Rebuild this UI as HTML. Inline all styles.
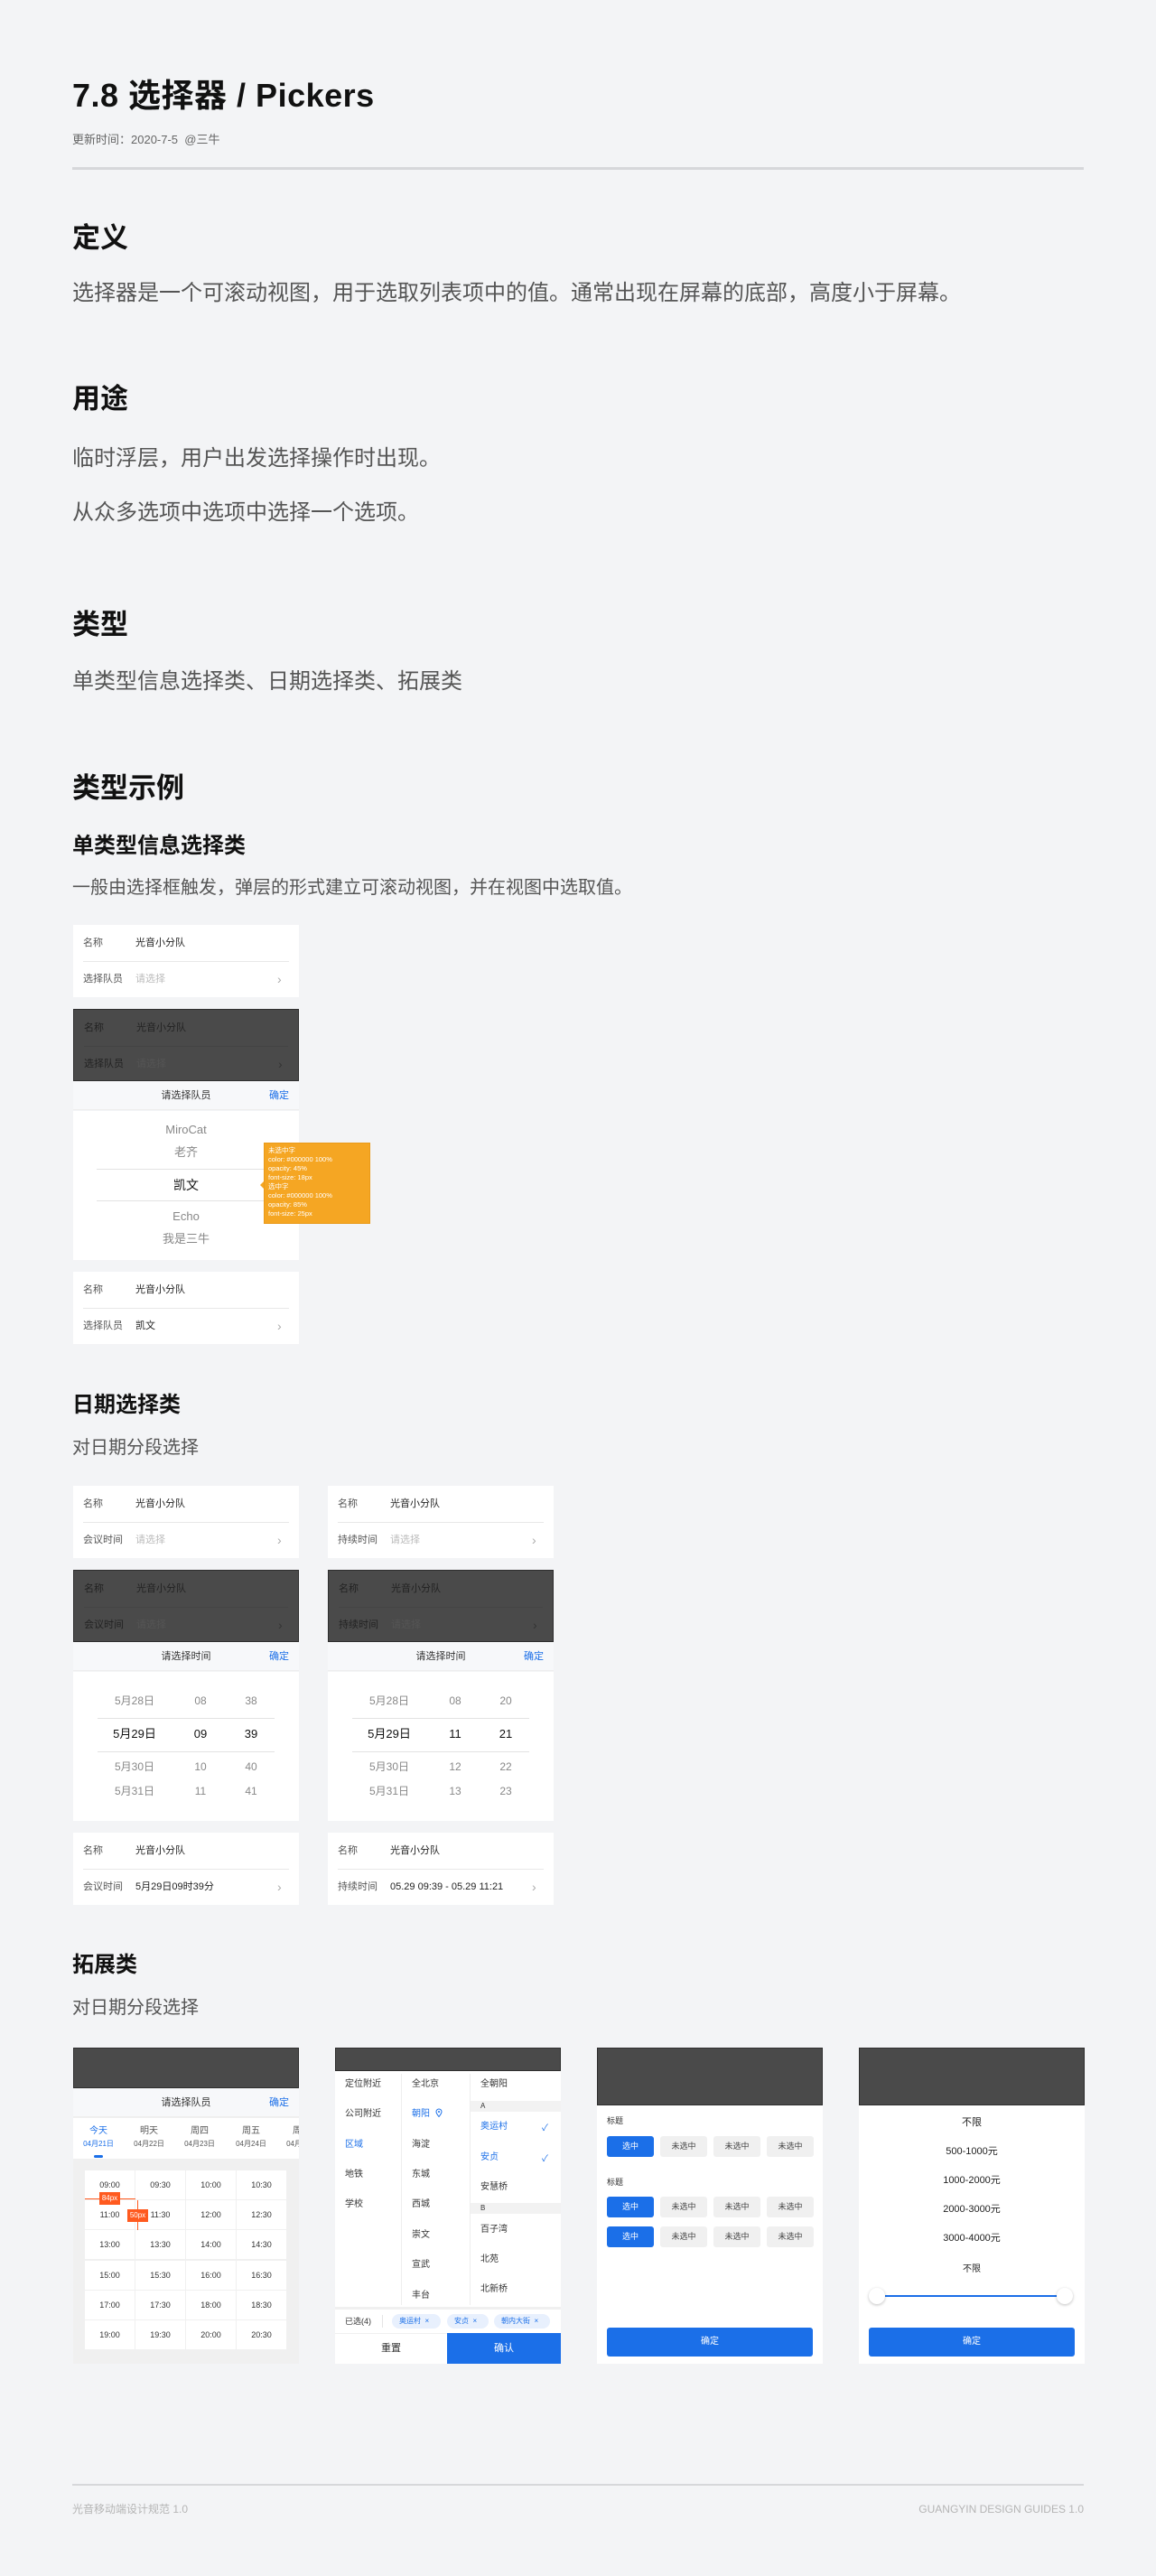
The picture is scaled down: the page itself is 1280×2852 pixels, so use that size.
<!DOCTYPE html>
<html><head><meta charset="utf-8">
<style>
*{margin:0;padding:0;box-sizing:border-box}
body{width:1280px;height:2852px;background:#f3f4f6;position:relative;font-family:"Liberation Sans","Noto Sans CJK SC",sans-serif;color:#222;overflow:hidden}
.a{position:absolute;white-space:nowrap}
.h1{font-size:36px;font-weight:bold;color:#111;letter-spacing:0.5px}
.h2{font-size:31px;font-weight:bold;color:#111}
.h3{font-size:24px;font-weight:bold;color:#111}
.p{font-size:24px;color:#555}
.ps{font-size:20px;color:#555}
.card{position:absolute;width:250px;height:80px;background:#fff}
.card .l{position:absolute;left:11px;font-size:11px;line-height:40px;color:#555}
.card .v{position:absolute;left:69px;font-size:11px;line-height:40px;color:#222}
.card .ph{color:#bbb}
.card .dv{position:absolute;left:11px;right:11px;top:40px;height:1px;background:#e8e8e8}
.card .ch{position:absolute;left:226px;top:40px;line-height:40px;font-size:14px;color:#aaa}
.dark{background:#4a4a4a;border:1px solid #2e2e2e}
.dark .l,.dark .v{color:#222}
.dark .ph{color:#555}
.dark .dv{background:#444}
.dark .ch{color:#333}
.hd{position:absolute;width:250px;height:32px;background:#f7f8fa;border-bottom:1px solid #eee}
.hd .t{position:absolute;left:0;right:0;text-align:center;font-size:11px;line-height:32px;color:#333}
.hd .ok{position:absolute;right:11px;font-size:11px;line-height:32px;color:#1b6fe8}
.body{position:absolute;width:250px;background:#fff}
.c{position:absolute;text-align:center;transform:translateX(-50%);white-space:nowrap}
.ln{position:absolute;height:1px;background:#e3e3e3}
.cell{position:absolute;width:56px;height:33px;background:#fff;font-size:9px;line-height:33px;text-align:center;color:#333;border-right:1px solid #f0f0f0;border-bottom:1px solid #f0f0f0}
.btn{position:absolute;width:52px;height:23px;border-radius:3px;font-size:9px;line-height:23px;text-align:center;background:#f0f0f0;color:#444}
.btn.on{background:#1b6fe8;color:#fff}
.blue{color:#1b6fe8}
.tag{position:absolute;height:16px;top:5px;border-radius:8px;background:#e8f0fd;color:#1b6fe8;font-size:8px;line-height:16px;padding-left:8px}
</style></head><body>

<div class="a h1" style="left:80px;top:83px;line-height:46px">7.8 选择器 / Pickers</div>
<div class="a" style="left:80px;top:146px;font-size:13px;line-height:18px;color:#666">更新时间：2020-7-5 &nbsp;@三牛</div>
<div class="a" style="left:80px;top:185px;width:1120px;height:3px;background:#d6d7da"></div>

<div class="a h2" style="left:80px;top:244px;line-height:40px">定义</div>
<div class="a p" style="left:80px;top:310px;line-height:30px">选择器是一个可滚动视图，用于选取列表项中的值。通常出现在屏幕的底部，高度小于屏幕。</div>
<div class="a h2" style="left:80px;top:422px;line-height:40px">用途</div>
<div class="a p" style="left:80px;top:493px;line-height:30px">临时浮层，用户出发选择操作时出现。</div>
<div class="a p" style="left:80px;top:553px;line-height:30px">从众多选项中选项中选择一个选项。</div>
<div class="a h2" style="left:80px;top:672px;line-height:40px">类型</div>
<div class="a p" style="left:80px;top:740px;line-height:30px">单类型信息选择类、日期选择类、拓展类</div>
<div class="a h2" style="left:80px;top:853px;line-height:40px">类型示例</div>
<div class="a h3" style="left:80px;top:922px;line-height:30px">单类型信息选择类</div>
<div class="a ps" style="left:80px;top:969px;line-height:28px">一般由选择框触发，弹层的形式建立可滚动视图，并在视图中选取值。</div>

<!-- single picker -->
<div class="card" style="left:81px;top:1024px"><div class="l" style="top:0">名称</div><div class="v" style="top:0">光音小分队</div><div class="dv"></div><div class="l" style="top:40px">选择队员</div><div class="v ph" style="top:40px">请选择</div><div class="ch">›</div></div>
<div class="card dark" style="left:81px;top:1117px"><div class="l" style="top:0">名称</div><div class="v" style="top:0">光音小分队</div><div class="dv"></div><div class="l" style="top:40px">选择队员</div><div class="v ph" style="top:40px">请选择</div><div class="ch">›</div></div>
<div class="hd" style="left:81px;top:1197px"><div class="t">请选择队员</div><div class="ok">确定</div></div>
<div class="body" style="left:81px;top:1230px;height:165px">
 <div class="c" style="left:125px;top:13px;font-size:13px;line-height:16px;color:#888">MiroCat</div>
 <div class="c" style="left:125px;top:38px;font-size:13px;line-height:16px;color:#888">老齐</div>
 <div class="ln" style="left:26px;width:198px;top:64px"></div>
 <div class="c" style="left:125px;top:73px;font-size:14px;line-height:18px;color:#111">凯文</div>
 <div class="ln" style="left:26px;width:198px;top:99px"></div>
 <div class="c" style="left:125px;top:109px;font-size:13px;line-height:16px;color:#888">Echo</div>
 <div class="c" style="left:125px;top:134px;font-size:13px;line-height:16px;color:#888">我是三牛</div>
</div>
<div class="a" style="left:292px;top:1265px;width:118px;height:90px;background:#f5a623;border:1px solid #e99a1a;color:#fff;font-size:7.5px;line-height:10px;padding:3px 4px;white-space:normal">未选中字<br>color: #000000 100%<br>opacity: 45%<br>font-size: 18px<br>选中字<br>color: #000000 100%<br>opacity: 85%<br>font-size: 25px</div>
<div class="a" style="left:288px;top:1308px;width:0;height:0;border:4px solid transparent;border-right-color:#f5a623;border-left:0"></div>
<div class="card" style="left:81px;top:1408px"><div class="l" style="top:0">名称</div><div class="v" style="top:0">光音小分队</div><div class="dv"></div><div class="l" style="top:40px">选择队员</div><div class="v" style="top:40px">凯文</div><div class="ch">›</div></div>

<div class="a h3" style="left:80px;top:1541px;line-height:30px">日期选择类</div>
<div class="a ps" style="left:80px;top:1589px;line-height:28px">对日期分段选择</div>

<!-- date picker 1 -->
<div class="card" style="left:81px;top:1645px"><div class="l" style="top:0">名称</div><div class="v" style="top:0">光音小分队</div><div class="dv"></div><div class="l" style="top:40px">会议时间</div><div class="v ph" style="top:40px">请选择</div><div class="ch">›</div></div>
<div class="card dark" style="left:81px;top:1738px"><div class="l" style="top:0">名称</div><div class="v" style="top:0">光音小分队</div><div class="dv"></div><div class="l" style="top:40px">会议时间</div><div class="v ph" style="top:40px">请选择</div><div class="ch">›</div></div>
<div class="hd" style="left:81px;top:1818px"><div class="t">请选择时间</div><div class="ok">确定</div></div>
<div class="body" style="left:81px;top:1851px;height:165px">
 <div class="c" style="left:68px;top:24px;font-size:12px;line-height:16px;color:#888">5月28日</div><div class="c" style="left:141px;top:24px;font-size:12px;line-height:16px;color:#888">08</div><div class="c" style="left:197px;top:24px;font-size:12px;line-height:16px;color:#888">38</div>
 <div class="ln" style="left:27px;width:196px;top:51px"></div>
 <div class="c" style="left:68px;top:60px;font-size:13px;line-height:18px;color:#111">5月29日</div><div class="c" style="left:141px;top:60px;font-size:13px;line-height:18px;color:#111">09</div><div class="c" style="left:197px;top:60px;font-size:13px;line-height:18px;color:#111">39</div>
 <div class="ln" style="left:27px;width:196px;top:88px"></div>
 <div class="c" style="left:68px;top:97px;font-size:12px;line-height:16px;color:#888">5月30日</div><div class="c" style="left:141px;top:97px;font-size:12px;line-height:16px;color:#888">10</div><div class="c" style="left:197px;top:97px;font-size:12px;line-height:16px;color:#888">40</div>
 <div class="c" style="left:68px;top:124px;font-size:12px;line-height:16px;color:#888">5月31日</div><div class="c" style="left:141px;top:124px;font-size:12px;line-height:16px;color:#888">11</div><div class="c" style="left:197px;top:124px;font-size:12px;line-height:16px;color:#888">41</div>
</div>
<div class="card" style="left:81px;top:2029px"><div class="l" style="top:0">名称</div><div class="v" style="top:0">光音小分队</div><div class="dv"></div><div class="l" style="top:40px">会议时间</div><div class="v" style="top:40px">5月29日09时39分</div><div class="ch">›</div></div>

<!-- date picker 2 -->
<div class="card" style="left:363px;top:1645px"><div class="l" style="top:0">名称</div><div class="v" style="top:0">光音小分队</div><div class="dv"></div><div class="l" style="top:40px">持续时间</div><div class="v ph" style="top:40px">请选择</div><div class="ch">›</div></div>
<div class="card dark" style="left:363px;top:1738px"><div class="l" style="top:0">名称</div><div class="v" style="top:0">光音小分队</div><div class="dv"></div><div class="l" style="top:40px">持续时间</div><div class="v ph" style="top:40px">请选择</div><div class="ch">›</div></div>
<div class="hd" style="left:363px;top:1818px"><div class="t">请选择时间</div><div class="ok">确定</div></div>
<div class="body" style="left:363px;top:1851px;height:165px">
 <div class="c" style="left:68px;top:24px;font-size:12px;line-height:16px;color:#888">5月28日</div><div class="c" style="left:141px;top:24px;font-size:12px;line-height:16px;color:#888">08</div><div class="c" style="left:197px;top:24px;font-size:12px;line-height:16px;color:#888">20</div>
 <div class="ln" style="left:27px;width:196px;top:51px"></div>
 <div class="c" style="left:68px;top:60px;font-size:13px;line-height:18px;color:#111">5月29日</div><div class="c" style="left:141px;top:60px;font-size:13px;line-height:18px;color:#111">11</div><div class="c" style="left:197px;top:60px;font-size:13px;line-height:18px;color:#111">21</div>
 <div class="ln" style="left:27px;width:196px;top:88px"></div>
 <div class="c" style="left:68px;top:97px;font-size:12px;line-height:16px;color:#888">5月30日</div><div class="c" style="left:141px;top:97px;font-size:12px;line-height:16px;color:#888">12</div><div class="c" style="left:197px;top:97px;font-size:12px;line-height:16px;color:#888">22</div>
 <div class="c" style="left:68px;top:124px;font-size:12px;line-height:16px;color:#888">5月31日</div><div class="c" style="left:141px;top:124px;font-size:12px;line-height:16px;color:#888">13</div><div class="c" style="left:197px;top:124px;font-size:12px;line-height:16px;color:#888">23</div>
</div>
<div class="card" style="left:363px;top:2029px"><div class="l" style="top:0">名称</div><div class="v" style="top:0">光音小分队</div><div class="dv"></div><div class="l" style="top:40px">持续时间</div><div class="v" style="top:40px">05.29 09:39 - 05.29 11:21</div><div class="ch">›</div></div>

<div class="a h3" style="left:80px;top:2161px;line-height:30px">拓展类</div>
<div class="a ps" style="left:80px;top:2209px;line-height:28px">对日期分段选择</div>

<!-- ext 1 -->
<div class="a" style="left:81px;top:2267px;width:250px;height:350px;background:#f0f0f0;overflow:hidden">
 <div class="a" style="left:0;top:0;width:250px;height:45px;background:#4a4a4a;border:1px solid #2e2e2e"></div>
 <div class="hd" style="left:0;top:45px"><div class="t">请选择队员</div><div class="ok">确定</div></div>
 <div class="a" style="left:0;top:78px;width:250px;height:45px;background:#fff"></div>
 <div class="c blue" style="left:28px;top:86px;font-size:10px;line-height:13px">今天</div><div class="c blue" style="left:28px;top:101px;font-size:8px;line-height:11px">04月21日</div>
 <div class="a" style="left:23px;top:119px;width:10px;height:3px;border-radius:2px;background:#1b6fe8"></div>
 <div class="c" style="left:84px;top:86px;font-size:10px;line-height:13px;color:#555">明天</div><div class="c" style="left:84px;top:101px;font-size:8px;line-height:11px;color:#555">04月22日</div>
 <div class="c" style="left:140px;top:86px;font-size:10px;line-height:13px;color:#555">周四</div><div class="c" style="left:140px;top:101px;font-size:8px;line-height:11px;color:#555">04月23日</div>
 <div class="c" style="left:197px;top:86px;font-size:10px;line-height:13px;color:#555">周五</div><div class="c" style="left:197px;top:101px;font-size:8px;line-height:11px;color:#555">04月24日</div>
 <div class="c" style="left:253px;top:86px;font-size:10px;line-height:13px;color:#555">周六</div><div class="c" style="left:253px;top:101px;font-size:8px;line-height:11px;color:#555">04月25日</div>
 <div class="a" style="left:13px;top:136px;width:224px;height:200px">
  <div class="cell" style="left:0;top:0">09:00</div><div class="cell" style="left:56px;top:0">09:30</div><div class="cell" style="left:112px;top:0">10:00</div><div class="cell" style="left:168px;top:0">10:30</div>
  <div class="cell" style="left:0;top:33px">11:00</div><div class="cell" style="left:56px;top:33px">11:30</div><div class="cell" style="left:112px;top:33px">12:00</div><div class="cell" style="left:168px;top:33px">12:30</div>
  <div class="cell" style="left:0;top:66px">13:00</div><div class="cell" style="left:56px;top:66px">13:30</div><div class="cell" style="left:112px;top:66px">14:00</div><div class="cell" style="left:168px;top:66px">14:30</div>
  <div class="cell" style="left:0;top:100px">15:00</div><div class="cell" style="left:56px;top:100px">15:30</div><div class="cell" style="left:112px;top:100px">16:00</div><div class="cell" style="left:168px;top:100px">16:30</div>
  <div class="cell" style="left:0;top:133px">17:00</div><div class="cell" style="left:56px;top:133px">17:30</div><div class="cell" style="left:112px;top:133px">18:00</div><div class="cell" style="left:168px;top:133px">18:30</div>
  <div class="cell" style="left:0;top:166px">19:00</div><div class="cell" style="left:56px;top:166px">19:30</div><div class="cell" style="left:112px;top:166px">20:00</div><div class="cell" style="left:168px;top:166px">20:30</div>
 </div>
 <div class="a" style="left:13px;top:167px;width:56px;height:1px;background:#ff5a1f"></div>
 <div class="a" style="left:29px;top:160px;width:23px;height:14px;background:#ff5a1f;color:#fff;font-size:8px;line-height:14px;text-align:center">84px</div>
 <div class="a" style="left:71px;top:169px;width:1px;height:33px;background:#ff5a1f"></div>
 <div class="a" style="left:60px;top:179px;width:23px;height:14px;background:#ff5a1f;color:#fff;font-size:8px;line-height:14px;text-align:center">50px</div>
</div>

<!-- ext 2 -->
<div class="a" style="left:371px;top:2267px;width:250px;height:350px;background:#fff;overflow:hidden">
 <div class="a" style="left:0;top:0;width:250px;height:26px;background:#4a4a4a;border:1px solid #2e2e2e"></div>
 <div class="a" style="left:73px;top:29px;width:1px;height:256px;background:#eee"></div>
 <div class="a" style="left:149px;top:29px;width:1px;height:256px;background:#eee"></div>
 <div class="a" style="left:11px;top:34px;font-size:10px;line-height:14px;color:#333">定位附近</div>
 <div class="a" style="left:11px;top:67px;font-size:10px;line-height:14px;color:#333">公司附近</div>
 <div class="a blue" style="left:11px;top:101px;font-size:10px;line-height:14px">区域</div>
 <div class="a" style="left:11px;top:134px;font-size:10px;line-height:14px;color:#333">地铁</div>
 <div class="a" style="left:11px;top:167px;font-size:10px;line-height:14px;color:#333">学校</div>
 <div class="a" style="left:85px;top:34px;font-size:10px;line-height:14px;color:#333">全北京</div>
 <div class="a blue" style="left:85px;top:67px;font-size:10px;line-height:14px">朝阳 &nbsp;<svg width="8" height="10" viewBox="0 0 8 10" style="vertical-align:-1px"><path d="M4 9.5C2 7 1 5.5 1 4a3 3 0 0 1 6 0c0 1.5-1 3-3 5.5z" fill="none" stroke="#1b6fe8" stroke-width="1"/><circle cx="4" cy="4" r="1" fill="#1b6fe8"/></svg></div>
 <div class="a" style="left:85px;top:101px;font-size:10px;line-height:14px;color:#333">海淀</div>
 <div class="a" style="left:85px;top:134px;font-size:10px;line-height:14px;color:#333">东城</div>
 <div class="a" style="left:85px;top:167px;font-size:10px;line-height:14px;color:#333">西城</div>
 <div class="a" style="left:85px;top:201px;font-size:10px;line-height:14px;color:#333">崇文</div>
 <div class="a" style="left:85px;top:234px;font-size:10px;line-height:14px;color:#333">宣武</div>
 <div class="a" style="left:85px;top:268px;font-size:10px;line-height:14px;color:#333">丰台</div>
 <div class="a" style="left:161px;top:34px;font-size:10px;line-height:14px;color:#333">全朝阳</div>
 <div class="a" style="left:150px;top:59px;width:100px;height:12px;background:#f2f2f2;font-size:8px;line-height:12px;padding-left:11px;color:#333">A</div>
 <div class="a blue" style="left:161px;top:81px;font-size:10px;line-height:14px">奥运村</div><div class="a blue" style="left:229px;top:80px;font-size:10px">✓</div>
 <div class="a blue" style="left:161px;top:115px;font-size:10px;line-height:14px">安贞</div><div class="a blue" style="left:229px;top:114px;font-size:10px">✓</div>
 <div class="a" style="left:161px;top:148px;font-size:10px;line-height:14px;color:#333">安慧桥</div>
 <div class="a" style="left:150px;top:172px;width:100px;height:12px;background:#f2f2f2;font-size:8px;line-height:12px;padding-left:11px;color:#333">B</div>
 <div class="a" style="left:161px;top:195px;font-size:10px;line-height:14px;color:#333">百子湾</div>
 <div class="a" style="left:161px;top:228px;font-size:10px;line-height:14px;color:#333">北苑</div>
 <div class="a" style="left:161px;top:261px;font-size:10px;line-height:14px;color:#333">北新桥</div>
 <div class="a" style="left:0;top:287px;width:250px;height:3px;background:#f0f0f0"></div>
 <div class="a" style="left:0;top:290px;width:250px;height:26px">
  <div class="a" style="left:11px;top:6px;font-size:9px;line-height:14px;color:#333">已选(4)</div>
  <div class="a" style="left:52px;top:6px;width:1px;height:14px;background:#e5e5e5"></div>
  <div class="tag" style="left:63px;width:54px">奥运村 &nbsp;×</div>
  <div class="tag" style="left:124px;width:46px">安贞 &nbsp;×</div>
  <div class="tag" style="left:176px;width:62px">朝内大街 &nbsp;×</div>
 </div>
 <div class="a" style="left:0;top:316px;width:250px;height:1px;background:#f0f0f0"></div>
 <div class="a" style="left:0;top:317px;width:124px;height:33px;font-size:11px;line-height:33px;text-align:center;color:#333">重置</div>
 <div class="a" style="left:124px;top:316px;width:126px;height:34px;background:#1b6fe8;font-size:11px;line-height:34px;text-align:center;color:#fff">确认</div>
</div>

<!-- ext 3 -->
<div class="a" style="left:661px;top:2267px;width:250px;height:350px;background:#fff;overflow:hidden">
 <div class="a" style="left:0;top:0;width:250px;height:64px;background:#4a4a4a;border:1px solid #2e2e2e"></div>
 <div class="a" style="left:11px;top:74px;font-size:9px;line-height:14px;color:#333">标题</div>
 <div class="btn on" style="left:11px;top:98px">选中</div><div class="btn" style="left:70px;top:98px">未选中</div><div class="btn" style="left:129px;top:98px">未选中</div><div class="btn" style="left:188px;top:98px">未选中</div>
 <div class="a" style="left:11px;top:142px;font-size:9px;line-height:14px;color:#333">标题</div>
 <div class="btn on" style="left:11px;top:165px">选中</div><div class="btn" style="left:70px;top:165px">未选中</div><div class="btn" style="left:129px;top:165px">未选中</div><div class="btn" style="left:188px;top:165px">未选中</div>
 <div class="btn on" style="left:11px;top:198px">选中</div><div class="btn" style="left:70px;top:198px">未选中</div><div class="btn" style="left:129px;top:198px">未选中</div><div class="btn" style="left:188px;top:198px">未选中</div>
 <div class="a" style="left:11px;top:310px;width:228px;height:32px;border-radius:3px;background:#1b6fe8;color:#fff;font-size:10px;line-height:32px;text-align:center">确定</div>
</div>

<!-- ext 4 -->
<div class="a" style="left:951px;top:2267px;width:250px;height:350px;background:#fff;overflow:hidden">
 <div class="a" style="left:0;top:0;width:250px;height:64px;background:#4a4a4a;border:1px solid #2e2e2e"></div>
 <div class="c" style="left:125px;top:75px;font-size:11px;line-height:16px;color:#222">不限</div>
 <div class="c" style="left:125px;top:107px;font-size:11px;line-height:16px;color:#222">500-1000元</div>
 <div class="c" style="left:125px;top:139px;font-size:11px;line-height:16px;color:#222">1000-2000元</div>
 <div class="c" style="left:125px;top:171px;font-size:11px;line-height:16px;color:#222">2000-3000元</div>
 <div class="c" style="left:125px;top:203px;font-size:11px;line-height:16px;color:#222">3000-4000元</div>
 <div class="c" style="left:125px;top:239px;font-size:10px;line-height:14px;color:#222">不限</div>
 <div class="a" style="left:21px;top:274px;width:207px;height:2px;background:#1b6fe8"></div>
 <div class="a" style="left:11px;top:266px;width:18px;height:18px;border-radius:50%;background:#fff;box-shadow:0 1px 3px rgba(0,0,0,.25)"></div>
 <div class="a" style="left:219px;top:266px;width:18px;height:18px;border-radius:50%;background:#fff;box-shadow:0 1px 3px rgba(0,0,0,.25)"></div>
 <div class="a" style="left:11px;top:310px;width:228px;height:32px;border-radius:3px;background:#1b6fe8;color:#fff;font-size:10px;line-height:32px;text-align:center">确定</div>
</div>

<div class="a" style="left:80px;top:2750px;width:1120px;height:2px;background:#d6d7da"></div>
<div class="a" style="left:80px;top:2770px;font-size:12px;line-height:16px;color:#b5b5b5">光音移动端设计规范 1.0</div>
<div class="a" style="right:80px;top:2770px;font-size:12px;line-height:16px;color:#b5b5b5">GUANGYIN DESIGN GUIDES 1.0</div>
</body></html>
